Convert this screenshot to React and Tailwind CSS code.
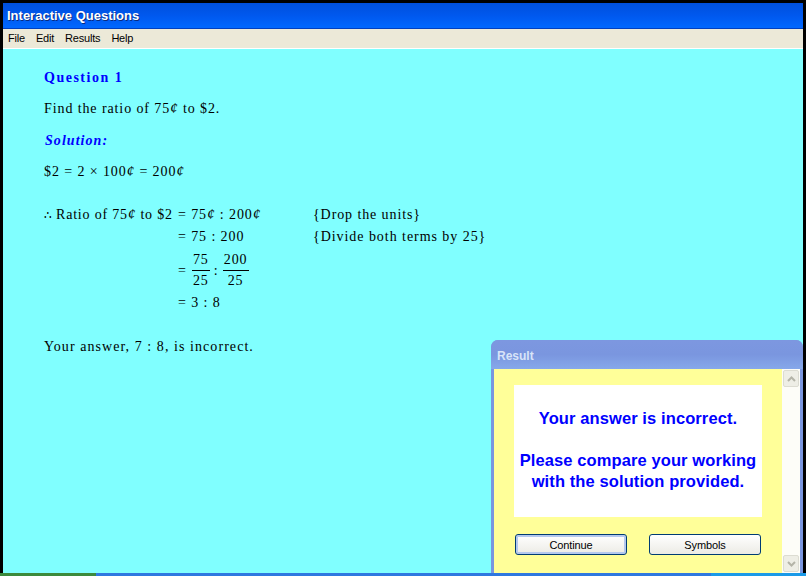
import React from "react";

const serif = "font-['Liberation_Serif','Times_New_Roman',serif]";
const sans = "font-['Liberation_Sans',Arial,sans-serif]";

// the reference's cent sign has a long slanted stroke, the italic cut is closest
function Cent() {
  return <i className="text-[15px] leading-none">¢</i>;
}

function Fraction({ top, bottom, width }) {
  return (
    <span className={`inline-flex flex-col items-center ${width}`}>
      <span className="leading-[17px] h-[20px] border-b border-black w-full text-center">{top}</span>
      <span className="leading-[20px] h-[20px]">{bottom}</span>
    </span>
  );
}

function ScrollButton({ up }) {
  return (
    <div className="w-[16px] h-[17px] mx-auto rounded-[2px] bg-[#eeeee6] border border-[#dcdcd2] flex items-center justify-center">
      <svg width="9" height="6" viewBox="0 0 9 6">
        <path d={up ? "M1 5 L4.5 1.5 L8 5" : "M1 1 L4.5 4.5 L8 1"} fill="none" stroke="#b4b4a8" strokeWidth="2" />
      </svg>
    </div>
  );
}

function XpButton({ label, focused }) {
  return (
    <button className={`w-[112px] h-[21px] pt-px rounded-[3px] border border-[#003c74] bg-gradient-to-b from-white to-[#ecebe5] text-[11px] tracking-[-0.1px] text-black ${sans} ${focused ? "shadow-[inset_0_0_0_2px_#b4c8ee]" : ""}`}>
      {label}
    </button>
  );
}

export default function App() {
  return (
    <div className="relative w-[806px] h-[576px] overflow-hidden bg-black pt-[3px] px-[3px] flex flex-col">
      {/* title bar */}
      <div className={`h-[26px] shrink-0 pl-[4px] flex items-center text-white text-[13px] font-bold bg-gradient-to-b from-[#0050dc] via-[#0058ee] to-[#0068ff] border-b border-[#0040c0] [text-shadow:1px_1px_0_#0a2a80] ${sans}`}>
        Interactive Questions
      </div>

      {/* menu */}
      <div className={`h-[19px] shrink-0 bg-[#ece9d8] flex items-center pl-[5px] gap-[11px] text-[11px] tracking-[-0.2px] text-black ${sans}`}>
        <span>File</span>
        <span>Edit</span>
        <span>Results</span>
        <span>Help</span>
      </div>
      <div className="h-px shrink-0 bg-white" />

      {/* question content */}
      <div className={`flex-1 bg-[#80ffff] pl-[41px] pt-[20px] text-[14px] text-black tracking-[0.9px] ${serif}`}>
        <div className="h-[18px] leading-[18px] text-[#0000ff] font-bold tracking-[1.5px]">Question 1</div>
        <div className="h-[18px] leading-[18px] mt-[13px]">Find the ratio of 75<Cent /> to $2.</div>
        <div className="h-[18px] leading-[18px] mt-[14px] pl-px text-[#0000ff] font-bold italic tracking-[1.05px]">Solution:</div>
        <div className="h-[18px] leading-[18px] mt-[13px]">$2 = 2 × 100<Cent /> = 200<Cent /></div>

        <div className="grid grid-cols-[134px_135px_1fr] mt-[25px]">
          <div className="h-[18px] leading-[18px] whitespace-nowrap tracking-[0.8px]">
            <span className="mr-[4px] tracking-normal text-[12px]">∴</span>Ratio of 75<Cent /> to $2
          </div>
          <div className="h-[18px] leading-[18px]">= 75<Cent /> : 200<Cent /></div>
          <div className="h-[18px] leading-[18px]">{"{Drop the units}"}</div>

          <div />
          <div className="h-[18px] leading-[18px] mt-[4px]">= 75 : 200</div>
          <div className="h-[18px] leading-[18px] mt-[4px] tracking-[0.95px]">{"{Divide both terms by 25}"}</div>

          <div />
          <div className="h-[40px] mt-[4px] flex items-center">
            <span>=</span>
            <span className="ml-[5px]"><Fraction top="75" bottom="25" width="w-[18px]" /></span>
            <span className="ml-[4px]">:</span>
            <span className="ml-[4px]"><Fraction top="200" bottom="25" width="w-[26px]" /></span>
          </div>
          <div />

          <div />
          <div className="h-[18px] leading-[18px] mt-[4px]">= 3 : 8</div>
          <div />
        </div>

        <div className="h-[18px] leading-[18px] mt-[26px] tracking-[1.06px]">Your answer, 7 : 8, is incorrect.</div>
      </div>

      {/* taskbar peeking out underneath */}
      <div className="h-[3px] shrink-0 -mx-[3px] flex">
        <div className="w-[96px] bg-[#3c8a3c]" />
        <div className="w-[615px] bg-[#2f78e0]" />
        <div className="flex-1 bg-[#1a9ae8]" />
      </div>

      {/* result dialog */}
      <div className="absolute left-[491px] top-[340px] w-[312px] h-[233px] rounded-t-[7px] bg-[#7a96df] flex flex-col overflow-hidden">
        <div className={`h-[29px] shrink-0 pl-[6px] pt-[3px] flex items-center text-[12px] font-bold text-[#d8e4f8] bg-gradient-to-b from-[#7d97e0] via-[#7a96df] to-[#86a8ea] ${sans}`}>
          Result
        </div>
        <div className="flex-1 mx-[3px] bg-[#ffff99] flex">
          <div className="flex-1 pl-[20px] pt-[16px]">
            <div className={`w-[248px] h-[132px] bg-white flex flex-col items-center pt-[23px] text-[#0000ff] text-[16.5px] font-bold leading-[21px] text-center tracking-[0.1px] whitespace-nowrap ${sans}`}>
              <span>Your answer is incorrect.</span>
              <span className="mt-[21px]">Please compare your working</span>
              <span>with the solution provided.</span>
            </div>
            <div className="flex gap-[22px] mt-[17px] ml-px">
              <XpButton label="Continue" focused />
              <XpButton label="Symbols" />
            </div>
          </div>
          <div className="w-[18px] shrink-0 bg-[#fdfdf8] flex flex-col justify-between py-px">
            <ScrollButton up />
            <ScrollButton />
          </div>
        </div>
      </div>
    </div>
  );
}
